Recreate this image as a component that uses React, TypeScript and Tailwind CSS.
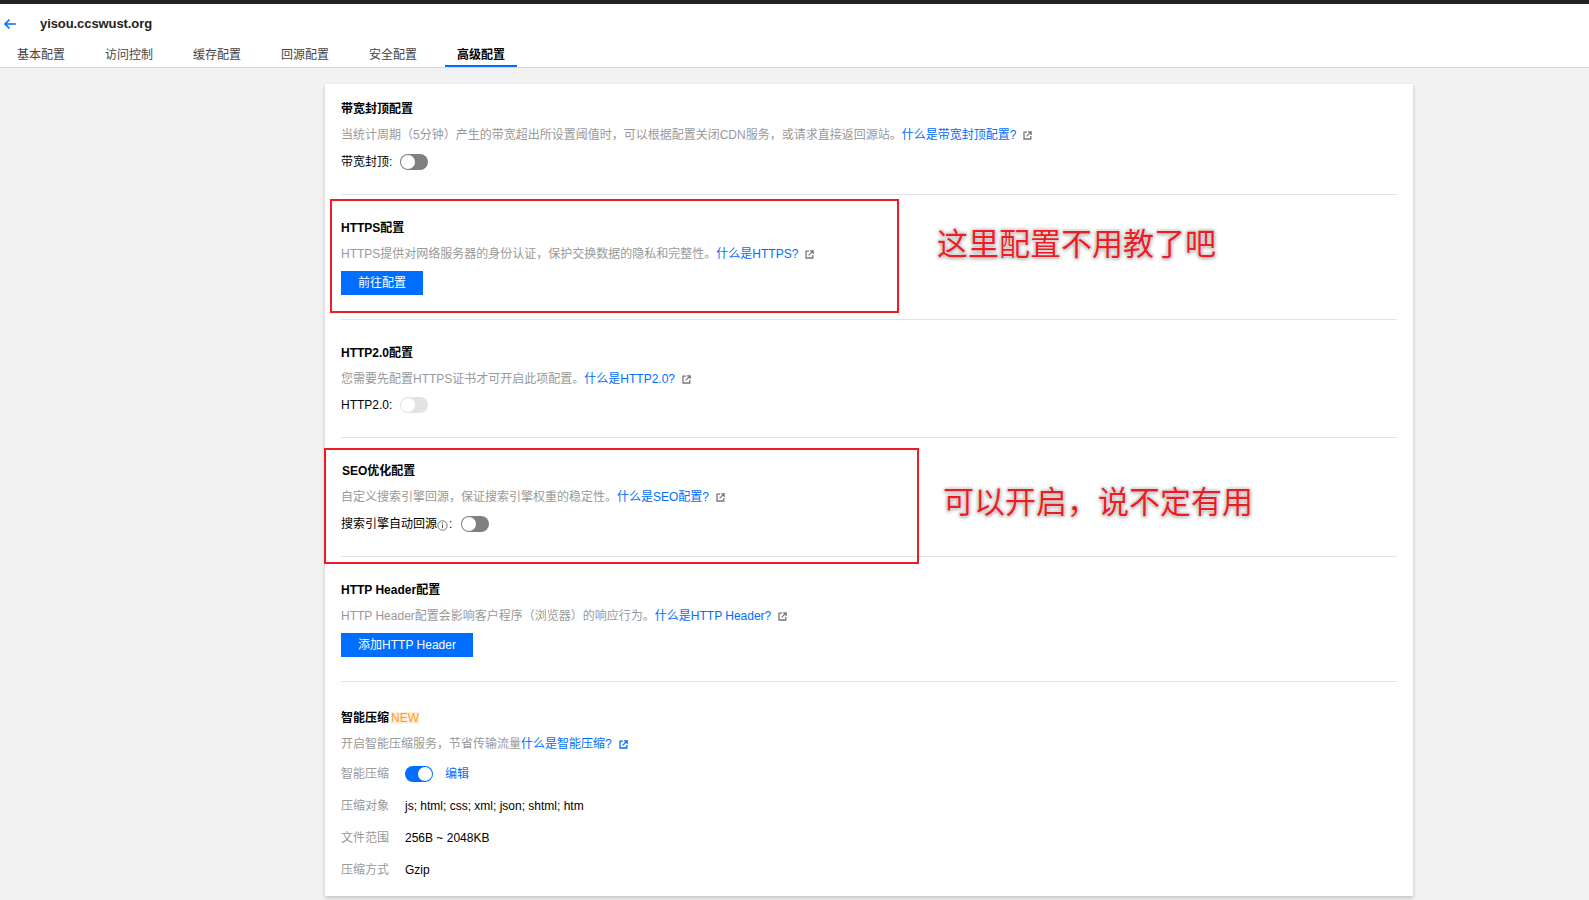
import React from "react";

const font = "font-['Liberation_Sans','Noto_Sans_CJK_SC',sans-serif]";

function Ext({ blue }: { blue?: boolean }) {
  const c = blue ? "#006eff" : "#777777";
  return (
    <svg width="9" height="9" viewBox="0 0 9 9" className="ml-[7px] inline-block align-[-1px]" fill="none">
      <path d="M4 1.2H1v6.8h6.8V5" stroke={c} strokeWidth="1.3" />
      <path d="M3.6 5.4 7.6 1.4M5 .8h3.2V4" stroke={c} strokeWidth="1.2" />
    </svg>
  );
}

function Desc({ text, link, blue }: { text: string; link: string; blue?: boolean }) {
  return (
    <div className="h-4 text-xs leading-4 text-[#999999] whitespace-nowrap">
      {text}
      <span className="text-[#006eff]">{link}</span>
      <Ext blue={blue} />
    </div>
  );
}

function Title({ children }: { children: React.ReactNode }) {
  return <div className="h-4 text-xs leading-4 font-bold text-black whitespace-nowrap">{children}</div>;
}

function Toggle({ state }: { state: "off" | "disabled" | "on" }) {
  const track =
    state === "on"
      ? "bg-[#006eff] justify-end"
      : state === "off"
        ? "bg-[#808080] justify-start"
        : "bg-[#e3e3e3] justify-start";
  return (
    <div className={`flex h-4 w-7 items-center rounded-full px-[1px] ${track}`}>
      <div className="h-3.5 w-3.5 rounded-full bg-white" />
    </div>
  );
}

function Btn({ children, w }: { children: React.ReactNode; w: string }) {
  return (
    <div className={`flex h-6 items-center justify-center bg-[#006eff] text-xs text-white whitespace-nowrap ${w}`}>
      {children}
    </div>
  );
}

function InfoRow({ label, children }: { label: string; children: React.ReactNode }) {
  return (
    <div className="flex h-6 items-center text-xs">
      <div className="w-16 text-[#999999]">{label}</div>
      <div className="flex items-center text-black">{children}</div>
    </div>
  );
}

const tabs = ["基本配置", "访问控制", "缓存配置", "回源配置", "安全配置", "高级配置"];

export default function App() {
  return (
    <div className={`relative h-[900px] w-[1589px] overflow-hidden bg-[#f2f2f2] ${font}`}>
      <div className="h-1 bg-[#222222]" />
      <header className="h-[64px] border-b border-[#d9d9d9] bg-white">
        <div className="flex h-10 items-center pl-[3px]">
          <svg width="14" height="14" viewBox="0 0 14 14" fill="none" stroke="#006eff" strokeWidth="1.6">
            <path d="M13 7H2M6.500 2.500 2 7l4.500 4.500" />
          </svg>
          <div className="ml-[23px] text-[13px] font-bold tracking-[-0.08px] text-[#222222]">yisou.ccswust.org</div>
        </div>
        <div className="ml-[5px] flex h-[23px] gap-4">
          {tabs.map((t, i) => (
            <div
              key={t}
              className={`flex w-[72px] items-center justify-center border-b-2 text-xs ${
                i === 5 ? "border-[#006eff] font-bold text-black" : "border-transparent text-[#444444]"
              }`}
            >
              {t}
            </div>
          ))}
        </div>
      </header>

      <main className="ml-[325px] mt-4 h-[812px] w-[1088px] bg-white px-4 shadow-[0_2px_4px_rgba(0,0,0,0.2)]">
        <section className="h-[111px] border-b border-[#e5e5e5] pt-[17px]">
          <Title>带宽封顶配置</Title>
          <div className="mt-[10px]">
            <Desc
              text="当统计周期（5分钟）产生的带宽超出所设置阈值时，可以根据配置关闭CDN服务，或请求直接返回源站。"
              link="什么是带宽封顶配置?"
            />
          </div>
          <div className="mt-[11px] flex items-center gap-2 text-xs text-black">
            <span className="w-[51px] whitespace-nowrap">带宽封顶:</span>
            <Toggle state="off" />
          </div>
        </section>

        <section className="h-[125px] border-b border-[#e5e5e5] pt-[25px]">
          <Title>HTTPS配置</Title>
          <div className="mt-[10px]">
            <Desc text="HTTPS提供对网络服务器的身份认证，保护交换数据的隐私和完整性。" link="什么是HTTPS?" />
          </div>
          <div className="mt-[9px]">
            <Btn w="w-[82px]">前往配置</Btn>
          </div>
        </section>

        <section className="h-[118px] border-b border-[#e5e5e5] pt-[25px]">
          <Title>HTTP2.0配置</Title>
          <div className="mt-[10px]">
            <Desc text="您需要先配置HTTPS证书才可开启此项配置。" link="什么是HTTP2.0?" />
          </div>
          <div className="mt-[10px] flex items-center gap-2 text-xs text-black">
            <span className="w-[51px] whitespace-nowrap">HTTP2.0:</span>
            <Toggle state="disabled" />
          </div>
        </section>

        <section className="h-[119px] border-b border-[#e5e5e5] pt-[25px]">
          <div className="pl-[1px]">
            <Title>SEO优化配置</Title>
          </div>
          <div className="mt-[10px]">
            <Desc text="自定义搜索引擎回源，保证搜索引擎权重的稳定性。" link="什么是SEO配置?" />
          </div>
          <div className="mt-[11px] flex items-center text-xs text-black">
            <span className="whitespace-nowrap">搜索引擎自动回源</span>
            <svg width="11" height="11" viewBox="0 0 11 11" fill="none" className="mt-[3px]">
              <circle cx="5.500" cy="5.500" r="4.700" stroke="#777777" />
              <path d="M5.500 4.500v3.600M5.500 2.400v1.200" stroke="#555555" />
            </svg>
            <span className="ml-[1px] mr-[9px]">:</span>
            <Toggle state="off" />
          </div>
        </section>

        <section className="h-[125px] border-b border-[#e5e5e5] pt-[25px]">
          <Title>HTTP Header配置</Title>
          <div className="mt-[10px]">
            <Desc text="HTTP Header配置会影响客户程序（浏览器）的响应行为。" link="什么是HTTP Header?" />
          </div>
          <div className="mt-[9px]">
            <Btn w="w-[132px]">添加HTTP Header</Btn>
          </div>
        </section>

        <section className="pt-[28px]">
          <div className="flex h-4 items-center text-xs font-bold text-black">
            智能压缩
            <span className="ml-[2px] bg-[#ffefdd] text-xs font-normal leading-[12px] text-[#ff9c19]">NEW</span>
          </div>
          <div className="mt-[10px]">
            <Desc text="开启智能压缩服务，节省传输流量" link="什么是智能压缩?" blue />
          </div>
          <div className="mt-[10px] flex flex-col gap-2">
            <InfoRow label="智能压缩">
              <Toggle state="on" />
              <span className="ml-3 text-[#006eff]">编辑</span>
            </InfoRow>
            <InfoRow label="压缩对象">js; html; css; xml; json; shtml; htm</InfoRow>
            <InfoRow label="文件范围">256B ~ 2048KB</InfoRow>
            <InfoRow label="压缩方式">Gzip</InfoRow>
          </div>
        </section>
      </main>

      <div className="absolute left-[330px] top-[199px] h-[114px] w-[569px] border-2 border-[#ed1c24]" />
      <div className="absolute left-[324px] top-[448px] h-[116px] w-[595px] border-2 border-[#ed1c24]" />

      <div className="absolute left-[937px] top-[224px] text-[31px] leading-[42px] whitespace-nowrap text-[#ed1c24] [text-shadow:0_0_2px_#fff,0_0_3px_#fff,0_0_3px_rgba(0,0,0,0.6),0_1px_4px_rgba(0,0,0,0.4)]">
        这里配置不用教了吧
      </div>
      <div className="absolute left-[943px] top-[482px] text-[31px] leading-[42px] whitespace-nowrap text-[#ed1c24] [text-shadow:0_0_2px_#fff,0_0_3px_#fff,0_0_3px_rgba(0,0,0,0.6),0_1px_4px_rgba(0,0,0,0.4)]">
        可以开启，说不定有用
      </div>
    </div>
  );
}
